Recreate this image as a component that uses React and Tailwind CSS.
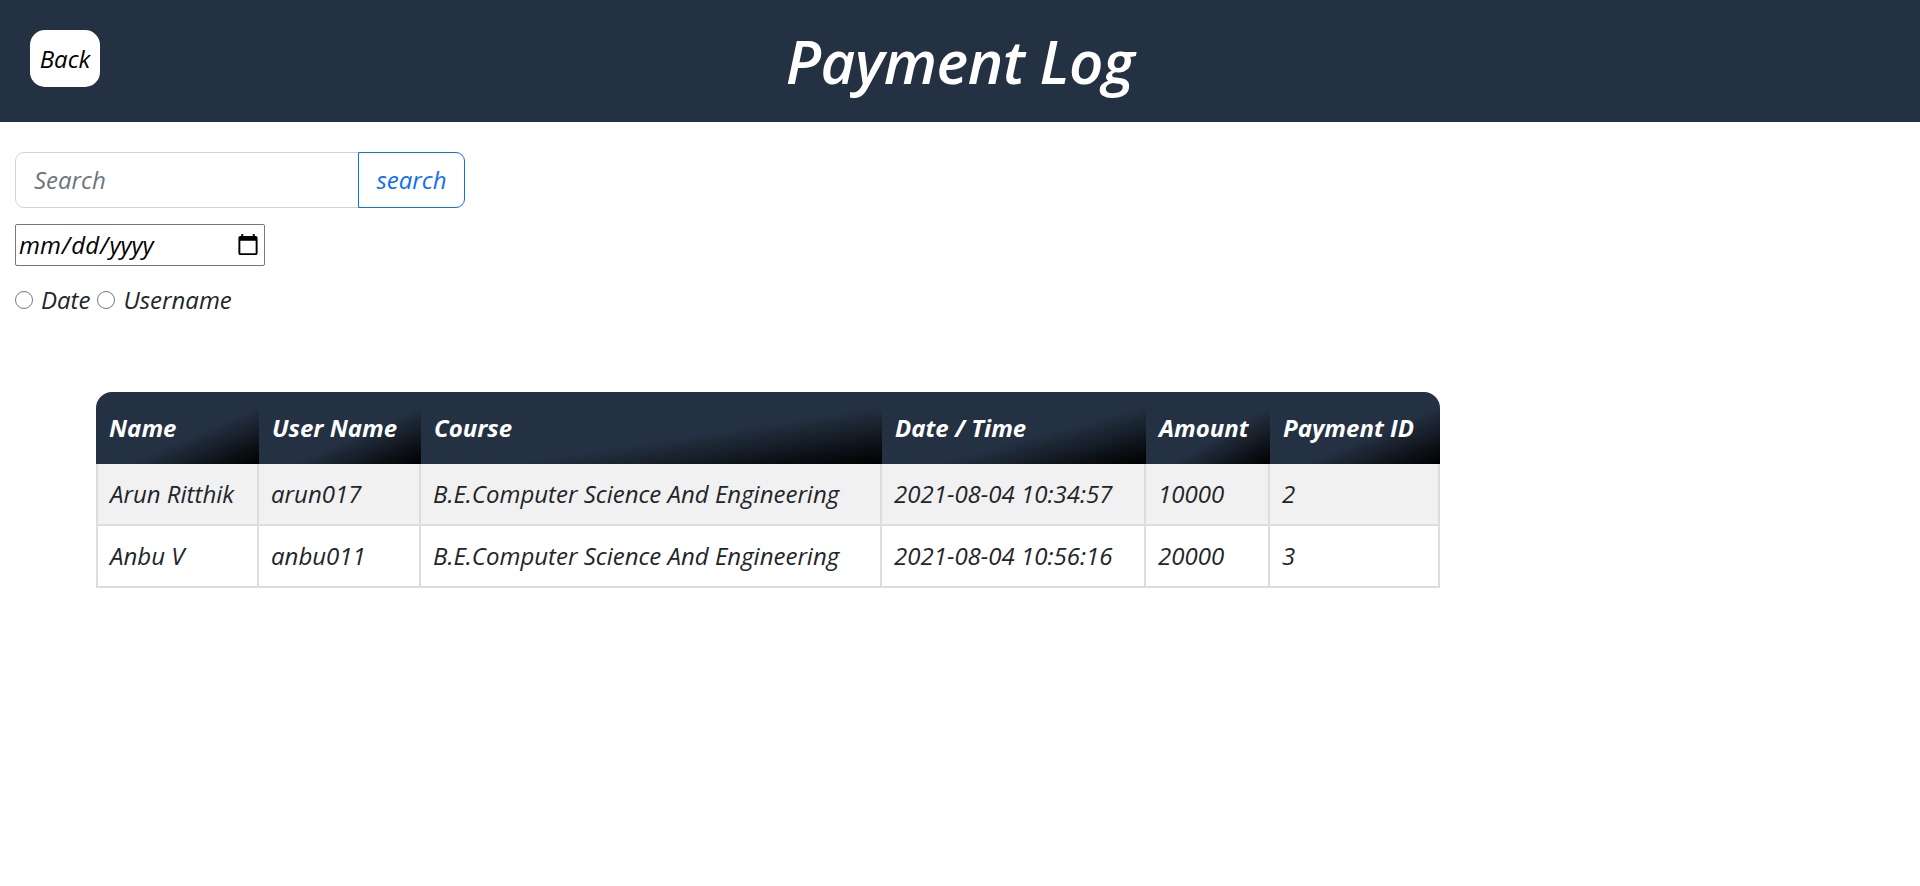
import React from "react";

const rows = [
  { name: "Arun Ritthik", user: "arun017", course: "B.E.Computer Science And Engineering", dt: "2021-08-04 10:34:57", amount: "10000", pid: "2" },
  { name: "Anbu V", user: "anbu011", course: "B.E.Computer Science And Engineering", dt: "2021-08-04 10:56:16", amount: "20000", pid: "3" },
];

const heads = ["Name", "User Name", "Course", "Date / Time", "Amount", "Payment ID"];
const widths = ["w-[163px]", "w-[162px]", "w-[461px]", "w-[264px]", "w-[124px]", "w-[170px]"];

export default function App() {
  return (
    <div className="min-h-[886px] bg-white font-['Open_Sans',sans-serif] italic text-[#212529]">
      <header className="grid h-[122px] grid-cols-[1fr_auto_1fr] items-center bg-[#243142]">
        <div className="self-start pl-[30px] pt-[30px]">
          <button className="flex h-[57px] w-[70px] items-center justify-center rounded-[15px] bg-white text-[24px] italic text-black">
            Back
          </button>
        </div>
        <h1 className="text-[60px] font-semibold leading-[72px] tracking-[-0.5px] text-white">Payment Log</h1>
        <div />
      </header>

      <main className="px-[15px] pt-[30px]">
        <div className="flex h-[56px]">
          <input
            type="text"
            placeholder="Search"
            className="w-[344px] rounded-l-[9px] border border-[#ced4da] px-[18px] text-[24px] italic outline-none placeholder:text-[#6c757d]"
          />
          <button className="-ml-px w-[107px] rounded-r-[9px] border border-[#0d6efd] text-[24px] italic text-[#0d6efd]">
            search
          </button>
        </div>

        <div className="mt-[16px]">
          <input
            type="date"
            className="h-[42px] w-[250px] rounded-[2px] border border-[#767676] px-[2px] text-[24px] italic text-black"
          />
        </div>

        <div className="mt-[16px] flex h-[36px] items-center text-[24px] leading-[36px]">
          <input type="radio" name="f" className="m-0 h-[18px] w-[18px]" />
          <span className="ml-[8px]">Date</span>
          <input type="radio" name="f" className="ml-[7px] h-[18px] w-[18px]" />
          <span className="ml-[8px]">Username</span>
        </div>

        <table className="mt-[74px] ml-[81px] w-[1344px] table-fixed border-separate border-spacing-0 text-left text-[24px]">
          <colgroup>
            {widths.map((w, i) => (
              <col key={i} className={w} />
            ))}
          </colgroup>
          <thead>
            <tr>
              {heads.map((h, i) => (
                <th
                  key={h}
                  className={
                    "h-[72px] bg-[linear-gradient(to_bottom_right,#243142_60%,#000)] px-[13px] font-bold italic text-white " +
                    (i === 0 ? "rounded-tl-[16px]" : "") +
                    (i === heads.length - 1 ? "rounded-tr-[16px]" : "")
                  }
                >
                  {h}
                </th>
              ))}
            </tr>
          </thead>
          <tbody>
            {rows.map((r, ri) => (
              <tr key={r.pid} className={ri === 0 ? "bg-[#f1f1f1]" : "bg-white"}>
                {[r.name, r.user, r.course, r.dt, r.amount, r.pid].map((v, i) => (
                  <td
                    key={i}
                    className={
                      "h-[62px] border-r-2 border-b-2 border-[#dddddd] px-[12px] " + (i === 0 ? "border-l-2" : "")
                    }
                  >
                    {v}
                  </td>
                ))}
              </tr>
            ))}
          </tbody>
        </table>
      </main>
    </div>
  );
}
